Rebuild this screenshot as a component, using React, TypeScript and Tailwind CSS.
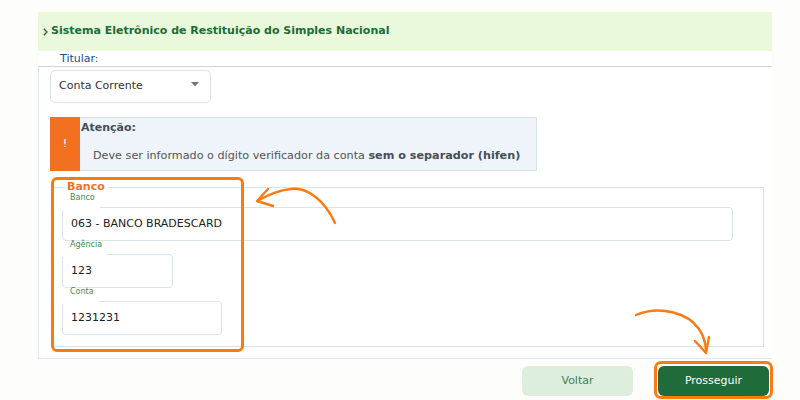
import React from "react";

const font = { fontFamily: '"DejaVu Sans", Verdana, sans-serif' };

function Field({ label, value, width }: { label: string; value: string; width: string }) {
  return (
    <div className="flex flex-col">
      <div className="relative z-10 -mb-[3px] h-[16px] w-fit bg-white pl-[8px] pr-[5px] text-[8px] leading-[8px] text-[#3b8b4b]">
        {label}
      </div>
      <div
        className={`${width} flex h-[34px] items-center rounded-[4px] border border-[#dde3ea] bg-white pl-[8px] text-[11px] text-[#222]`}
      >
        {value}
      </div>
    </div>
  );
}

export default function App() {
  return (
    <div className="relative h-[400px] w-[800px] overflow-hidden bg-[#fdfdfc]" style={font}>
      <div className="ml-[38px] w-[734px]">
        <div className="h-[12px]" />
        <div className="flex h-[39px] items-center bg-[#eaf8dc] pl-[5px]">
          <svg width="5" height="8" viewBox="0 0 5 8" className="mr-[3px]">
            <path d="M0.8 0.8 L4 4 L0.8 7.2" fill="none" stroke="#1e6b35" strokeWidth="1.3" />
          </svg>
          <span className="text-[11px] font-bold text-[#1e6b35]">
            Sistema Eletrônico de Restituição do Simples Nacional
          </span>
        </div>
        <div className="flex h-[16px] items-center bg-white pl-[22px] pt-[1px] text-[11px] text-[#1c4f86] border-b border-[#d4d4d4] shadow-[0_1px_1px_#e6e6e6]">
          Titular:
        </div>
        <div className="border-b border-l border-[#dde8f2] bg-white pb-[11px] pl-[11px] pr-[8px] pt-[3px]">
          <div className="flex h-[33px] w-[161px] items-center justify-between rounded-[5px] border border-[#dfe3e8] pl-[8px] pr-[11px] text-[11px] text-[#333]">
            <span>Conta Corrente</span>
            <svg width="8" height="5" viewBox="0 0 8 5" className="-mt-[4px]">
              <path d="M0 0 L8 0 L4 4.5 Z" fill="#777" />
            </svg>
          </div>
          <div className="mt-[14px] flex h-[54px] w-[487px]">
            <div className="flex w-[30px] items-center justify-center bg-[#f37021] text-[11px] text-white">!</div>
            <div className="flex-1 border border-l-0 border-[#d3e2ee] bg-[#eef4f9] pt-[3px]">
              <div className="pl-[1px] text-[11px] font-bold leading-[14px] text-[#474e57]">Atenção:</div>
              <div className="mt-[14px] pl-[13px] text-[11.2px] leading-[14px] text-[#555]">
                Deve ser informado o dígito verificador da conta{" "}
                <span className="font-bold text-[#474e57]">sem o separador (hifen)</span>
              </div>
            </div>
          </div>
          <fieldset className="ml-[2px] mt-[9px] border border-[#d6e4f0] pb-[11px] pl-[9px] pr-[30px]">
            <legend className="ml-[2px] px-[3px] text-[11px] font-bold leading-[14px] text-[#f37021]">Banco</legend>
            <div className="flex flex-col">
              <Field label="Banco" value="063 - BANCO BRADESCARD" width="w-[671px]" />
              <Field label="Agência" value="123" width="w-[111px]" />
              <Field label="Conta" value="1231231" width="w-[160px]" />
            </div>
          </fieldset>
        </div>
        <div className="mt-[7px] flex justify-end gap-[25px] pr-[3px]">
          <button className="flex h-[30px] w-[111px] items-center justify-center rounded-[6px] bg-[#ddeedd] text-[11px] text-[#3f7f4f]">
            Voltar
          </button>
          <button className="flex h-[30px] w-[111px] items-center justify-center rounded-[6px] bg-[#1f6b39] text-[11px] font-medium text-white">
            Prosseguir
          </button>
        </div>
      </div>

      <div className="pointer-events-none absolute left-[51px] top-[177px] h-[175px] w-[193px] rounded-[6px] border-[3px] border-[#fb7a12]" />
      <div className="pointer-events-none absolute left-[654px] top-[361px] h-[38px] w-[119px] rounded-[7px] border-[3px] border-[#fb7a12]" />

      <svg className="pointer-events-none absolute left-0 top-0" width="800" height="400" viewBox="0 0 800 400">
        <g fill="none" stroke="#fb7a12" strokeWidth="2.4" strokeLinecap="round" strokeLinejoin="round">
          <path d="M335 223 C 325 201, 308 187, 291 189 C 279 190, 268 195, 259 200" />
          <path d="M268 189 L257 201 L273 206" />
          <path d="M636 315 C 660 305, 688 313, 699 329 C 705 338, 706 345, 706 352" />
          <path d="M695 341 L706 353 L709 337" />
        </g>
      </svg>
    </div>
  );
}
